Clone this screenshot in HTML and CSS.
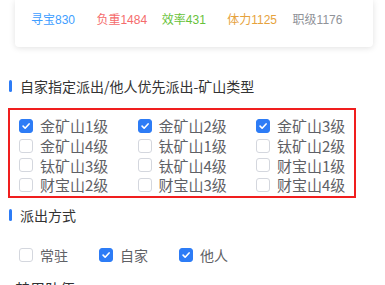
FILE: index.html
```html
<!DOCTYPE html>
<html lang="zh">
<head>
<meta charset="utf-8">
<link rel="stylesheet" href="styles.css">
</head>
<body>
<div class="card">
  <span class="stat blue">寻宝830</span>
  <span class="stat red">负重1484</span>
  <span class="stat green">效率431</span>
  <span class="stat orange">体力1125</span>
  <span class="stat gray">职级1176</span>
</div>

<div class="section-title title-first"><span class="bar"></span><span class="title-text">自家指定派出/他人优先派出-矿山类型</span></div>

<div class="mine-box">
  <label class="cb"><span class="box on"><svg viewBox="0 0 14 14"><path d="M3.6 7.2 L6 9.6 L10.6 4.6"/></svg></span><span class="lbl">金矿山1级</span></label>
  <label class="cb"><span class="box on"><svg viewBox="0 0 14 14"><path d="M3.6 7.2 L6 9.6 L10.6 4.6"/></svg></span><span class="lbl">金矿山2级</span></label>
  <label class="cb"><span class="box on"><svg viewBox="0 0 14 14"><path d="M3.6 7.2 L6 9.6 L10.6 4.6"/></svg></span><span class="lbl">金矿山3级</span></label>
  <label class="cb"><span class="box"></span><span class="lbl">金矿山4级</span></label>
  <label class="cb"><span class="box"></span><span class="lbl">钛矿山1级</span></label>
  <label class="cb"><span class="box"></span><span class="lbl">钛矿山2级</span></label>
  <label class="cb"><span class="box"></span><span class="lbl">钛矿山3级</span></label>
  <label class="cb"><span class="box"></span><span class="lbl">钛矿山4级</span></label>
  <label class="cb"><span class="box"></span><span class="lbl">财宝山1级</span></label>
  <label class="cb"><span class="box"></span><span class="lbl">财宝山2级</span></label>
  <label class="cb"><span class="box"></span><span class="lbl">财宝山3级</span></label>
  <label class="cb"><span class="box"></span><span class="lbl">财宝山4级</span></label>
</div>

<div class="section-title title-second"><span class="bar"></span><span class="title-text">派出方式</span></div>

<div class="options">
  <label class="cb opt"><span class="box"></span><span class="lbl small">常驻</span></label>
  <label class="cb opt"><span class="box on"><svg viewBox="0 0 14 14"><path d="M3.6 7.2 L6 9.6 L10.6 4.6"/></svg></span><span class="lbl small">自家</span></label>
  <label class="cb opt"><span class="box on"><svg viewBox="0 0 14 14"><path d="M3.6 7.2 L6 9.6 L10.6 4.6"/></svg></span><span class="lbl small">他人</span></label>
</div>

<div class="next-title">禁用队伍</div>
</body>
</html>
```

FILE: styles.css
```css
html, body {
  margin: 0;
  padding: 0;
  background: #ffffff;
}
body {
  width: 385px;
  height: 285px;
  overflow: hidden;
  font-family: "Noto Sans CJK SC", "Noto Sans", sans-serif;
}
.card {
  box-sizing: border-box;
  width: 358px;
  height: 47px;
  margin-left: 15px;
  padding: 12px 15px 0 16px;
  display: grid;
  grid-template-columns: repeat(5, 1fr);
  align-items: start;
  background: #fff;
  border-radius: 0 0 4px 4px;
  box-shadow: 0 1px 6px rgba(0, 0, 0, 0.12);
}
.stat {
  font-family: "Liberation Sans", "Noto Sans CJK SC", sans-serif;
  font-size: 12px;
  line-height: 17px;
  white-space: nowrap;
}
.blue { color: #409eff; }
.red { color: #f56c6c; }
.green { color: #67c23a; }
.orange { color: #e6a23c; }
.gray { color: #909399; }

.section-title {
  display: flex;
  align-items: center;
  height: 20px;
  padding-left: 9px;
}
.title-first { margin-top: 29px; }
.title-second { margin-top: 7px; }
.bar {
  width: 3px;
  height: 12px;
  border-radius: 2px;
  background: #2d7cf6;
  margin-right: 8px;
}
.title-text {
  font-size: 14px;
  line-height: 20px;
  color: #333333;
  white-space: nowrap;
}

.mine-box {
  box-sizing: border-box;
  width: 348px;
  height: 90px;
  margin: 12px 0 0 8px;
  border: 2px solid #f01e1e;
  padding: 6px 0 0 9px;
  display: grid;
  grid-template-columns: repeat(3, 118.5px);
  grid-auto-rows: 19.7px;
}
.cb {
  display: flex;
  align-items: center;
  white-space: nowrap;
}
.box {
  box-sizing: border-box;
  width: 14px;
  height: 14px;
  border: 1px solid #d4d7de;
  border-radius: 3px;
  background: #fff;
  flex: none;
  display: flex;
}
.box.on {
  background: #2d7cf6;
  border-color: #2d7cf6;
}
.box svg {
  width: 12px;
  height: 12px;
}
.box svg path {
  fill: none;
  stroke: #fff;
  stroke-width: 1.9;
  stroke-linecap: round;
  stroke-linejoin: round;
}
.lbl {
  margin-left: 7px;
  font-size: 15px;
  line-height: 19px;
  color: #5f6166;
}
.lbl.small {
  font-size: 14px;
}

.options {
  display: flex;
  height: 20px;
  margin-top: 20px;
  padding-left: 19px;
}
.opt {
  width: 80px;
}

.next-title {
  margin-top: 14px;
  padding-left: 15px;
  font-size: 15px;
  line-height: 20px;
  color: #303133;
}
```
